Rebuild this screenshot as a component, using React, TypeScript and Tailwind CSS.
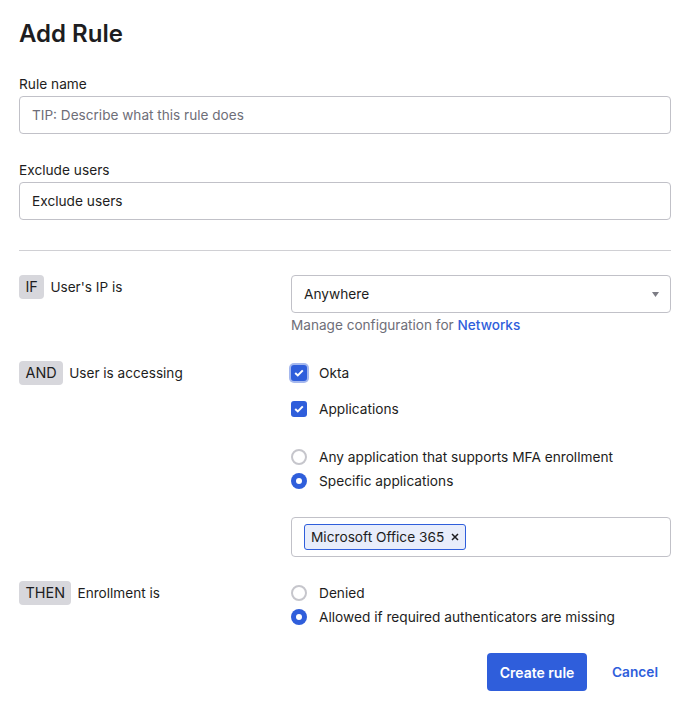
const font = "font-['Inter',sans-serif]"

function Badge({ children }: { children: string }) {
  return (
    <span className="flex h-6 items-center rounded bg-[#d7d7dc] px-[6.5px] text-[14.4px] text-[#1d1d21]">
      {children}
    </span>
  )
}

function Condition({ badge, label }: { badge: string; label: string }) {
  return (
    <div className="flex w-[272px] shrink-0 items-start gap-[6px]">
      <Badge>{badge}</Badge>
      <span className="text-[13.6px] leading-6 text-[#1d1d21]">{label}</span>
    </div>
  )
}

function Checkbox({ label, focused }: { label: string; focused?: boolean }) {
  return (
    <div className="flex h-6 items-center gap-3">
      <span
        className={
          "flex h-4 w-4 items-center justify-center rounded-[3px] bg-[#2f5edb] " +
          (focused ? "shadow-[0_0_0_2px_#a5b8ee]" : "")
        }
      >
        <svg width="10" height="8" viewBox="0 0 10 8" fill="none">
          <path d="M1.2 4 L3.8 6.4 L8.8 1.4" stroke="white" strokeWidth="2" />
        </svg>
      </span>
      <span className="text-[13.7px] text-[#1d1d21]">{label}</span>
    </div>
  )
}

function Radio({ label, checked }: { label: string; checked?: boolean }) {
  return (
    <div className="flex h-6 items-center gap-3">
      {checked ? (
        <span className="flex h-4 w-4 items-center justify-center rounded-full bg-[#2f5edb]">
          <span className="h-[6px] w-[6px] rounded-full bg-white" />
        </span>
      ) : (
        <span className="h-4 w-4 rounded-full border-2 border-[#c6c6cc] bg-white" />
      )}
      <span className="text-[13.7px] text-[#1d1d21]">{label}</span>
    </div>
  )
}

export default function App() {
  return (
    <div className={font + " h-[711px] w-[691px] bg-white pt-[18px] pl-[19px] text-[#1d1d21]"}>
      <div className="w-[652px]">
        <h1 className="pt-px text-[24px] leading-[30px] font-semibold">Add Rule</h1>

        <label className="mt-[24px] block text-[13.7px] leading-[23px]">Rule name</label>
        <div className="flex h-[38px] items-center rounded border border-[#c1c1c8] px-3 text-[13.6px] text-[#6e6e78]">
          TIP: Describe what this rule does
        </div>

        <label className="mt-[25px] block text-[13.7px] leading-[23px]">Exclude users</label>
        <div className="flex h-[38px] items-center rounded border border-[#c1c1c8] px-3 text-[13.7px]">
          Exclude users
        </div>

        <div className="mt-[30px] h-px bg-[#d0d0d4]" />

        <div className="mt-6 flex">
          <Condition badge="IF" label="User's IP is" />
          <div className="flex-1">
            <div className="flex h-[38px] items-center justify-between rounded border border-[#c1c1c8] pr-[11px] pl-3 text-[13.7px]">
              Anywhere
              <svg width="7" height="5" viewBox="0 0 7 5">
                <path d="M0 0 H7 L3.5 5 Z" fill="#7c7c84" />
              </svg>
            </div>
            <p className="text-[13.6px] leading-6 text-[#6e6e78]">
              Manage configuration for <span className="font-medium text-[#2f5edb]">Networks</span>
            </p>
          </div>
        </div>

        <div className="mt-6 flex">
          <Condition badge="AND" label="User is accessing" />
          <div className="flex-1">
            <Checkbox label="Okta" focused />
            <div className="mt-3">
              <Checkbox label="Applications" />
            </div>
            <div className="mt-6">
              <Radio label="Any application that supports MFA enrollment" />
              <Radio label="Specific applications" checked />
            </div>
            <div className="mt-6 flex h-10 items-center rounded border border-[#c1c1c8] px-3">
              <span className="flex h-[26px] items-center gap-[7px] rounded-[3px] border border-[#2f5edb] bg-[#e8edfb] px-[6px] text-[13.7px]">
                Microsoft Office 365
                <svg width="8" height="8" viewBox="0 0 8 8" fill="none">
                  <path d="M1 1 L7 7 M7 1 L1 7" stroke="#1d1d21" strokeWidth="1.5" />
                </svg>
              </span>
            </div>
          </div>
        </div>

        <div className="mt-6 flex">
          <Condition badge="THEN" label="Enrollment is" />
          <div className="flex-1">
            <Radio label="Denied" />
            <Radio label="Allowed if required authenticators are missing" checked />
          </div>
        </div>

        <div className="mt-6 flex items-center justify-end">
          <button className="h-[38px] w-[100px] rounded bg-[#2f5edb] text-[14px] font-semibold text-white">
            Create rule
          </button>
          <button className="mr-[13px] ml-[25px] text-[13.7px] font-semibold text-[#2f5edb]">Cancel</button>
        </div>
      </div>
    </div>
  )
}
